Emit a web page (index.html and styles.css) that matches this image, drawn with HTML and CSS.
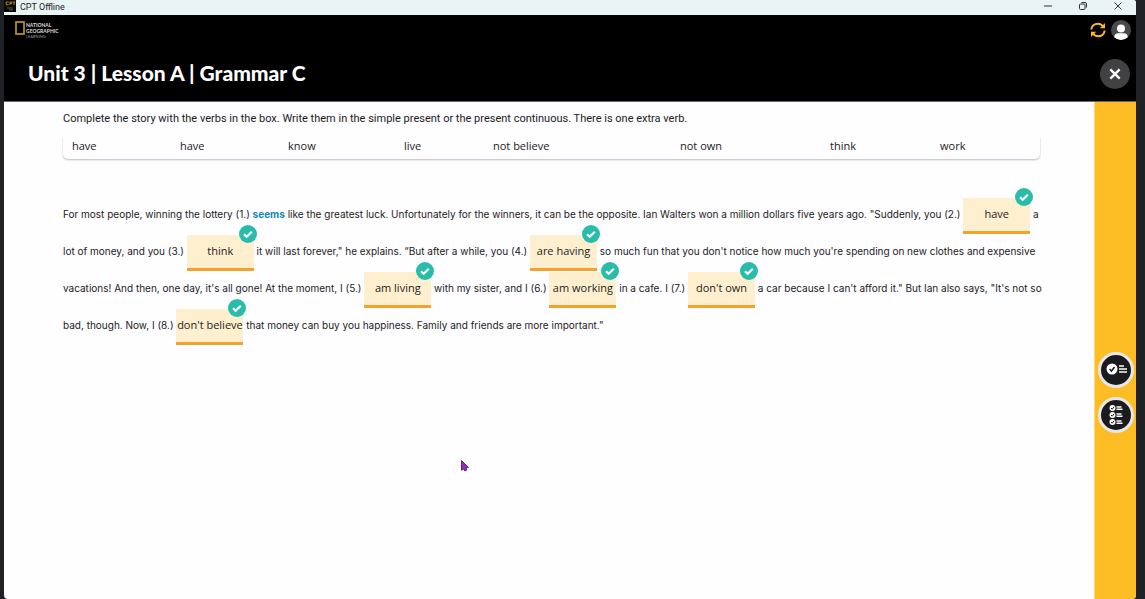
FILE: index.html
```html
<!DOCTYPE html>
<html lang="en">
<head>
<meta charset="utf-8">
<title>CPT Offline</title>
<link rel="stylesheet" href="styles.css">
</head>
<body>
<div class="window">
  <div class="titlebar">
    <svg class="app-icon" viewBox="0 0 12 12" aria-hidden="true"><rect width="12" height="12" fill="#0c0a06"/><path d="M4.600 2H2.200v2.800h2.400M6 5V2h1.800v1.600H6M8.800 2h2.400M10 2v3" fill="none" stroke="#a88a1c" stroke-width="1"/><path d="M3 8h6M5 9.800h4" stroke="#555" stroke-width="1"/></svg>
    <span class="app-name">CPT Offline</span>
    <div class="window-controls">
      <button class="window-button" aria-label="Minimize"><svg viewBox="0 0 10 10"><path d="M1 5h8"/></svg></button>
      <button class="window-button" aria-label="Restore"><svg viewBox="0 0 10 10"><rect x="1.500" y="3" width="5.500" height="5.500" rx="1"/><path d="M3.500 1.500H7A1.500 1.500 0 0 1 8.500 3v3.500"/></svg></button>
      <button class="window-button" aria-label="Close window"><svg viewBox="0 0 10 10"><path d="M1.500 1.500l7 7M8.500 1.500l-7 7"/></svg></button>
    </div>
  </div>
  <header class="header">
    <div class="brand-row">
      <div class="brand">
        <svg class="brand-mark" viewBox="0 0 10 14" aria-hidden="true"><rect x="1" y="1" width="8" height="12" fill="none" stroke="#c9a012" stroke-width="1.600"/></svg>
        <div class="brand-text">
          <span class="brand-name">NATIONAL</span>
          <span class="brand-name">GEOGRAPHIC</span>
          <span class="brand-sub">LEARNING</span>
        </div>
      </div>
      <div class="account">
        <button class="icon-button" aria-label="Sync"><svg class="sync" viewBox="0 0 16 16"><path d="M1.500 7.500V6.500Q2.500 1.800 8 1.700Q11 1.700 13 4.500M14.500 8.500V9.500Q13.500 14.200 8 14.300Q5 14.300 3 11.500" fill="none" stroke="#fdb924" stroke-width="1.900"/><path d="M15 1v5.200H9.800zM1 15V9.800h5.200z" fill="#fdb924"/></svg></button>
        <button class="icon-button" aria-label="Profile"><svg class="avatar" viewBox="0 0 20 20"><circle cx="10" cy="10" r="10" fill="#4a494b"/><circle cx="10" cy="8.500" r="4" fill="#fff"/><path d="M3.200 17.300C3.200 14.500 5 13.300 7 13.300h6c2 0 3.800 1.200 3.800 4A10 10 0 0 1 3.200 17.300z" fill="#fff"/></svg></button>
      </div>
    </div>
    <div class="title-row">
      <h1 class="title">Unit 3 | Lesson A | Grammar C</h1>
      <button class="close" aria-label="Close activity"><svg viewBox="0 0 12 12"><path d="M2 2l8 8M10 2l-8 8"/></svg></button>
    </div>
  </header>
  <div class="body">
    <main class="content">
      <p class="instructions">Complete the story with the verbs in the box. Write them in the simple present or the present continuous. There is one extra verb.</p>
      <div class="word-bank">
        <span>have</span><span>have</span><span>know</span><span>live</span><span>not believe</span><span>not own</span><span>think</span><span>work</span>
      </div>
      <p class="story">
        For most people, winning the lottery (1.) <strong class="example">seems</strong> like the greatest luck. Unfortunately for the winners, it can be the opposite. Ian Walters won a million dollars five years ago. "Suddenly, you (2.) <span class="blank"><input aria-label="Answer 2" value="have"><svg class="check" viewBox="0 0 18 18"><use href="#tick"/></svg></span> a<br>
        lot of money, and you (3.) <span class="blank"><input aria-label="Answer 3" value="think"><svg class="check" viewBox="0 0 18 18"><use href="#tick"/></svg></span> it will last forever," he explains. “But after a while, you (4.) <span class="blank"><input aria-label="Answer 4" value="are having"><svg class="check" viewBox="0 0 18 18"><use href="#tick"/></svg></span> so much fun that you don't notice how much you're spending on new clothes and expensive<br>
        vacations! And then, one day, it's all gone! At the moment, I (5.) <span class="blank"><input aria-label="Answer 5" value="am living"><svg class="check" viewBox="0 0 18 18"><use href="#tick"/></svg></span> with my sister, and I (6.) <span class="blank"><input aria-label="Answer 6" value="am working"><svg class="check" viewBox="0 0 18 18"><use href="#tick"/></svg></span> in a cafe. I (7.) <span class="blank"><input aria-label="Answer 7" value="don't own"><svg class="check" viewBox="0 0 18 18"><use href="#tick"/></svg></span> a car because I can't afford it." But Ian also says, "It's not so<br>
        bad, though. Now, I (8.) <span class="blank"><input aria-label="Answer 8" value="don't believe"><svg class="check" viewBox="0 0 18 18"><use href="#tick"/></svg></span> that money can buy you happiness. Family and friends are more important."
      </p>
    </main>
    <aside class="rail">
      <button class="rail-button" aria-label="Check answer"><svg viewBox="0 0 30 30"><circle cx="11" cy="14" r="5.500" fill="#fff"/><path d="M8.500 14l2 2 3-4" fill="none" stroke="#1b1a1c" stroke-width="1.500"/><path d="M18 11h5M18 14h8M18 17h8" stroke="#fff" stroke-width="1.500"/></svg></button>
      <button class="rail-button" aria-label="Check all answers"><svg viewBox="0 0 30 30"><g id="row"><circle cx="11.500" cy="8" r="3" fill="#fff"/><path d="M10 8l1.200 1.200 2-2.500" fill="none" stroke="#1b1a1c" stroke-width="1"/><path d="M15.500 7h5M15.500 9.300h6" stroke="#fff" stroke-width="1.400"/></g><use href="#row" y="7"/><use href="#row" y="14"/></svg></button>
    </aside>
  </div>
</div>
<svg class="pointer" viewBox="0 0 8 12" aria-hidden="true"><path d="M.5.5v9.800l2-1.500 1.300 2.200 2-1-.8-2 2.500-.5z" fill="#a31fd0" stroke="#4a3a58" stroke-width="1"/></svg>
<svg class="defs" aria-hidden="true"><symbol id="tick" viewBox="0 0 18 18"><circle cx="9" cy="9" r="9" fill="#2abcab"/><path d="M5 9.300l2.700 2.500 5.100-5.100" fill="none" stroke="#fff" stroke-width="2.200"/></symbol></svg>
</body>
</html>
```

FILE: styles.css
```css
* { box-sizing: border-box; }
body {
  margin: 0;
  background: #202124;
  color: #1c1b1d;
  font-family: Lato, "Noto Sans", sans-serif;
  font-size: 11px;
}
button { border: 0; padding: 0; background: none; display: grid; place-items: center; }
.window {
  display: flex;
  flex-direction: column;
  min-height: 100vh;
  margin: 0 9px 0 4px;
  border-radius: 0 3px 4px 4px;
  overflow: hidden;
  background: #fefdff;
}
.titlebar { display: flex; align-items: center; gap: 4px; height: 15px; background: #eaf3f6; }
.app-icon { width: 12px; height: 12px; align-self: flex-start; }
.app-name { font-family: Roboto, sans-serif; font-size: 9px; line-height: 14px; align-self: flex-start; }
.window-controls { display: flex; align-self: flex-start; gap: 25px; margin-left: auto; padding-right: 13px; }
.window-button { width: 10px; height: 12px; }
.window-button svg { width: 10px; height: 10px; fill: none; stroke: #333; stroke-width: 1; }
.header { background: #000; height: 87px; border-bottom: 1px solid #666; }
.brand-row { display: flex; justify-content: space-between; padding: 5px 5px 0 11px; height: 44px; }
.brand { display: flex; gap: 1px; padding-top: 1px; }
.brand-mark { width: 10px; height: 14px; }
.brand-text { display: flex; flex-direction: column; color: #ddd; padding-top: 1px; }
.brand-name { font-size: 5px; line-height: 6px; font-weight: 700; }
.brand-sub { font-size: 4px; line-height: 6px; color: #999; }
.account { display: flex; gap: 5px; align-items: flex-start; }
.icon-button { height: 20px; }
.sync { width: 16px; height: 16px; }
.avatar { width: 20px; height: 20px; }
.title-row { display: flex; align-items: center; justify-content: space-between; padding: 0 6px 0 24px; }
.title { margin: 0; color: #fff; font-size: 21px; line-height: 28px; padding-bottom: 2px; font-weight: 900; }
.close { width: 30px; height: 30px; border-radius: 50%; background: #414042; }
.close svg { width: 14px; height: 14px; fill: none; stroke: #fff; stroke-width: 2; }
.body { display: flex; flex: 1; }
.content { flex: 1; min-width: 0; padding: 8px 54px 0 59px; }
.instructions { margin: 0; font-family: Roboto, sans-serif; line-height: 18px; }
.word-bank {
  display: grid;
  grid-template-columns: 108fr 108fr 116fr 89fr 187fr 150fr 110fr 100fr;
  align-items: center;
  height: 31px;
  padding: 8px 0 4px 9px;
  font-family: "Open Sans", sans-serif;
  border-radius: 0 0 5px 5px;
  box-shadow: 0 1px 2px #bbb;
  clip-path: inset(10px -1px -4px -1px);
}
.story { margin: 37px -10px 0 0; font-family: Inter, sans-serif; font-size: 10px; line-height: 37px; white-space: nowrap; }
.example { color: #118bb0; }
.blank { position: relative; display: inline-block; height: 36px; margin: -1px 0 -3px; vertical-align: middle; line-height: 36px; }
.blank input {
  display: block;
  width: 67px;
  height: 36px;
  padding: 0 0 3px;
  border: 0;
  border-bottom: 3px solid #f5a22d;
  background: #fef0cf;
  color: inherit;
  font-family: "Open Sans", sans-serif;
  font-size: 11px;
  text-align: center;
}
.check { position: absolute; top: -10px; right: -3px; width: 18px; height: 18px; }
.rail { display: flex; flex-direction: column; align-items: center; gap: 9px; width: 42px; padding-top: 250px; background: #fdbe25; border-left: 1px solid #fdd778; }
.rail-button { width: 36px; height: 36px; border: 3px solid #e8e6e8; border-radius: 50%; background: #1b1a1c; }
.rail-button svg { width: 30px; height: 30px; }
.pointer { position: absolute; left: 461px; top: 460px; width: 8px; height: 12px; }
.defs { position: absolute; width: 0; height: 0; }
```
